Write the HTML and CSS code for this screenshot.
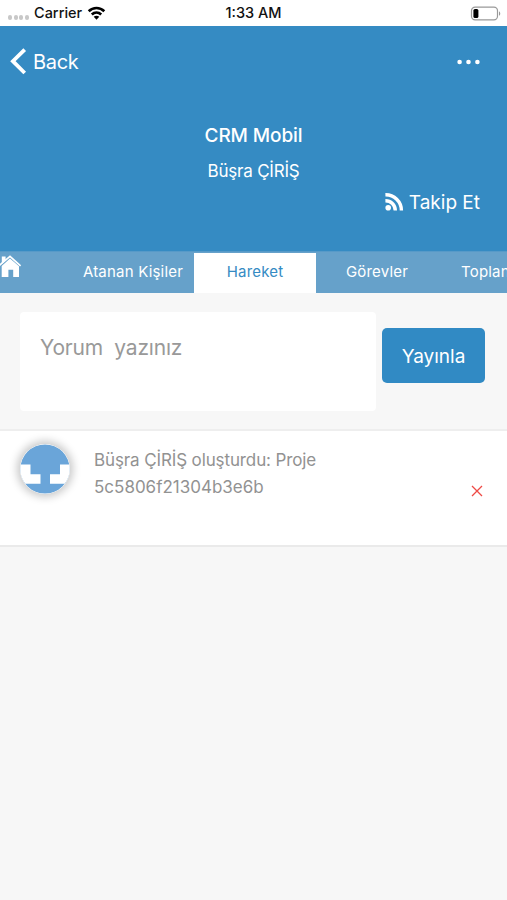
FILE: index.html
```html
<!DOCTYPE html>
<html lang="tr">
<head>
<meta charset="utf-8">
<title>CRM Mobil</title>
<link rel="stylesheet" href="styles.css">
</head>
<body>
<div class="status">
  <div class="status-left">
    <span class="signal"><i></i><i></i><i></i><i></i></span>
    <span class="carrier">Carrier</span>
    <svg class="wifi" width="19" height="14" viewBox="0 0 18 14" fill="none" stroke="#000" stroke-width="2.6"><path d="M1.2 5.2C5.6 .9 12.4 .9 16.8 5.2"/><path d="M4.3 8.5c2.7-2.5 6.7-2.5 9.4 0"/><path d="M9 13.8l-2.8-3c1.5-1.4 4.1-1.4 5.6 0z" fill="#000" stroke="none"/></svg>
  </div>
  <span class="clock">1:33 AM</span>
  <svg class="battery" width="31" height="15" viewBox="0 0 31 15"><rect x="1.5" y="1.1" width="26" height="12.8" rx="3.6" fill="none" stroke="#999" stroke-width="1.2"/><rect x="3.4" y="3" width="5" height="9" rx="1.6"/><path d="M29 5.2c1.7.9 1.7 3.7 0 4.6z" fill="#999"/></svg>
</div>
<header class="header">
  <nav class="nav">
    <a class="back"><svg width="18" height="28" viewBox="0 0 18 28" fill="none" stroke="#fff" stroke-width="3.8"><path d="M15.7 1.6L3.9 13.2l11.8 11.8"/></svg><span>Back</span></a>
    <svg class="more" width="24" height="6" viewBox="0 0 24 6" fill="#fff"><circle cx="2.6" cy="3" r="2.3"/><circle cx="11.5" cy="3" r="2.3"/><circle cx="20.4" cy="3" r="2.3"/></svg>
  </nav>
  <h1 class="title">CRM Mobil</h1>
  <p class="owner">Büşra ÇİRİŞ</p>
  <a class="follow"><svg width="19" height="18" viewBox="0 0 19 18" fill="none" stroke="#fff" stroke-width="3.4"><circle cx="3.2" cy="14.8" r="2.8" fill="#fff" stroke="none"/><path d="M.4 7.7a9.8 9.8 0 0 1 9.9 9.8M.4 1.8a15.7 15.7 0 0 1 16 15.7"/></svg><span>Takip Et</span></a>
</header>
<nav class="tabs">
  <a class="tab home"><svg width="22" height="23" viewBox="0 0 22 23" fill="#fff"><path d="M1.8 1.6h3.8v4l-3.8 3.4z"/><path d="M-1 10.8L10 1.4 20.6 10.8" fill="none" stroke="#fff" stroke-width="1.7"/><path d="M1.7 11L10 3.6l9 7.6V22h-5.8v-7.2H8.4V22H1.7z"/></svg></a>
  <a class="tab people"><span>Atanan Kişiler</span></a>
  <a class="tab active"><span>Hareket</span></a>
  <a class="tab tasks"><span>Görevler</span></a>
  <a class="tab meetings"><span>Toplantılar</span></a>
</nav>
<section class="compose">
  <div class="comment">Yorum&nbsp; yazınız</div>
  <button class="publish">Yayınla</button>
</section>
<article class="entry">
  <svg class="avatar" width="50" height="50" viewBox="0 0 50 50"><circle cx="25" cy="25" r="24.6" fill="#6aa5d9"/><path d="M.7 20.5H10.5v9.7H20.5v9.5H5.3A24.6 24.6 0 0 1 .7 20.5zM49.3 20.5H40v9.7H30v9.5h14.7A24.6 24.6 0 0 0 49.3 20.5z" fill="#fff"/></svg>
  <div class="message"><p class="line one">Büşra ÇİRİŞ oluşturdu: Proje</p><p class="line two">5c5806f21304b3e6b</p></div>
  <svg class="remove" width="12" height="12" viewBox="0 0 12 12" fill="none" stroke="#ee4a45" stroke-width="1.3"><path d="M1 1l10 10M11 1L1 11"/></svg>
</article>
</body>
</html>
```
FILE: styles.css
```css
* { box-sizing: border-box; }
body {
  margin: 0;
  height: 900px;
  overflow: hidden;
  background: #f7f7f7;
  font-family: Inter, "Liberation Sans", sans-serif;
  color: #fff;
}
h1, p { margin: 0; }
span, p, h1 { white-space: nowrap; }
svg { display: block; flex: none; }

.status {
  height: 26px;
  background: #fff;
  color: #111;
  display: grid;
  grid-template-columns: 1fr auto 1fr;
  align-items: center;
  font-size: 14.5px;
  font-weight: 500;
  line-height: 26px;
}
.status-left { display: flex; align-items: center; padding-left: 8px; }
.signal { display: flex; gap: 1.4px; width: 26px; padding-top: 9px; }
.signal i { width: 4.2px; height: 4.2px; border-radius: 50%; background: #c8c8c8; }
.wifi { margin-left: 5px; }
.battery { justify-self: end; margin-right: 6px; }

.header {
  height: 225px;
  background: #358bc3;
  display: flex;
  flex-direction: column;
  align-items: center;
}
.nav {
  width: 100%;
  height: 72px;
  padding: 0 26px 0 9px;
  display: flex;
  align-items: center;
  justify-content: space-between;
}
.back { display: flex; align-items: center; gap: 6px; font-size: 20px; letter-spacing: -.3px; }
.title { margin-top: 25px; font-size: 19px; line-height: 26px; font-weight: 500; letter-spacing: -.1px; }
.owner { margin-top: 10px; font-size: 17px; line-height: 24px; letter-spacing: -.2px; }
.follow {
  align-self: flex-end;
  margin: 7px 27px 0 0;
  display: flex;
  align-items: center;
  gap: 5px;
  font-size: 19px;
  line-height: 26px;
}
.follow svg { margin-bottom: 2px; }

.tabs {
  height: 42px;
  background: #66a1ca;
  border-top: 1px solid #579ac8;
  display: flex;
  overflow: hidden;
  font-size: 15px;
  line-height: 40px;
  letter-spacing: .2px;
}
.tab { flex: none; text-align: center; }
.home { width: 72px; padding-top: 3px; }
.people { width: 122px; }
.active { width: 122px; background: #fff; color: #358bc3; margin-top: 1px; line-height: 38px; }
.tasks { width: 122px; }
.meetings { width: 122px; padding-left: 23px; text-align: left; }

.compose {
  height: 136px;
  padding: 19px 22px 18px 20px;
  display: flex;
  justify-content: space-between;
}
.comment {
  width: 356px;
  height: 99px;
  padding: 21px 20px;
  background: #fff;
  border-radius: 4px;
  color: #999;
  font-size: 21px;
  line-height: 30px;
  letter-spacing: -.2px;
}
.publish {
  width: 103px;
  height: 55px;
  margin-top: 16px;
  padding: 1px 0 0;
  border: 0;
  border-radius: 5px;
  background: #318ac4;
  color: #fff;
  font: 19px Inter, "Liberation Sans", sans-serif;
}

.entry {
  height: 118px;
  padding: 13px 24px 0 20px;
  background: #fff;
  border-top: 2px solid #eee;
  border-bottom: 2px solid #eaeaea;
  display: flex;
}
.avatar { border-radius: 50%; box-shadow: 0 0 9px 3px rgba(0, 0, 0, .22); }
.message { flex: 1; padding: 3px 0 0 24px; color: #929292; font-size: 17px; line-height: 27px; }
.one { letter-spacing: -.12px; }
.remove { margin-top: 41px; }
```
